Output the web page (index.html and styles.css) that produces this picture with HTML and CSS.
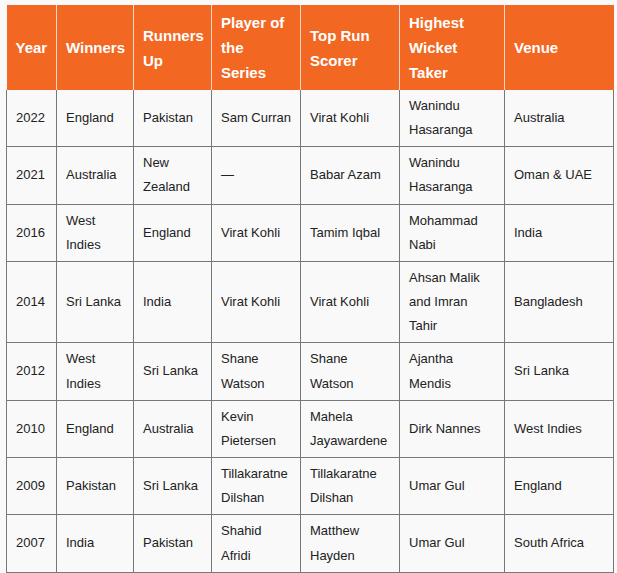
FILE: index.html
```html
<!DOCTYPE html>
<html>
<head>
<meta charset="utf-8">
<link rel="stylesheet" href="styles.css">
</head>
<body>
<table class="wc">
<colgroup>
<col class="c1"><col class="c2"><col class="c3"><col class="c4"><col class="c5"><col class="c6"><col class="c7">
</colgroup>
<thead>
<tr><th>Year</th><th>Winners</th><th>Runners Up</th><th>Player of the Series</th><th>Top Run Scorer</th><th>Highest Wicket Taker</th><th>Venue</th></tr>
</thead>
<tbody>
<tr><td>2022</td><td>England</td><td>Pakistan</td><td>Sam Curran</td><td>Virat Kohli</td><td>Wanindu Hasaranga</td><td>Australia</td></tr>
<tr><td>2021</td><td>Australia</td><td>New Zealand</td><td>—</td><td>Babar Azam</td><td>Wanindu Hasaranga</td><td>Oman &amp; UAE</td></tr>
<tr><td>2016</td><td>West Indies</td><td>England</td><td>Virat Kohli</td><td>Tamim Iqbal</td><td>Mohammad Nabi</td><td>India</td></tr>
<tr><td>2014</td><td>Sri Lanka</td><td>India</td><td>Virat Kohli</td><td>Virat Kohli</td><td>Ahsan Malik and Imran Tahir</td><td>Bangladesh</td></tr>
<tr><td>2012</td><td>West Indies</td><td>Sri Lanka</td><td>Shane Watson</td><td>Shane Watson</td><td>Ajantha Mendis</td><td>Sri Lanka</td></tr>
<tr><td>2010</td><td>England</td><td>Australia</td><td>Kevin Pietersen</td><td>Mahela Jayawardene</td><td>Dirk Nannes</td><td>West Indies</td></tr>
<tr><td>2009</td><td>Pakistan</td><td>Sri Lanka</td><td>Tillakaratne Dilshan</td><td>Tillakaratne Dilshan</td><td>Umar Gul</td><td>England</td></tr>
<tr><td>2007</td><td>India</td><td>Pakistan</td><td>Shahid Afridi</td><td>Matthew Hayden</td><td>Umar Gul</td><td>South Africa</td></tr>
</tbody>
</table>
</body>
</html>
```
FILE: styles.css
```css
html, body {
  margin: 0;
  padding: 0;
  background: #f9f9f9;
}
body {
  padding: 5px 0 0 6px;
  font-family: "Liberation Sans", Arial, sans-serif;
}
.wc {
  border-collapse: collapse;
  table-layout: fixed;
  width: 608px;
  background: #f9f9f9;
}
.c1 { width: 50px; }
.c2 { width: 77px; }
.c3 { width: 78px; }
.c4 { width: 89px; }
.c5 { width: 99px; }
.c6 { width: 105px; }
.c7 { width: 109px; }
.wc th {
  background: #f26722;
  color: #fff;
  font-weight: bold;
  font-size: 15px;
  line-height: 25px;
  text-align: left;
  padding: 5px 9px 5px 9px;
  border-left: 1px solid #f3d9cc;
  border-right: 1px solid #f3d9cc;
  border-top: none;
  border-bottom: none;
}
.wc th:first-child { border-left: none; }
.wc th:last-child { border-right: none; }
.wc td {
  color: #222;
  font-size: 13px;
  line-height: 24.15px;
  padding: 4px 7px 4px 9px;
  border: 1px solid #777;
  vertical-align: middle;
}
.wc tbody tr:first-child td {
  border-top: none;
}
```
